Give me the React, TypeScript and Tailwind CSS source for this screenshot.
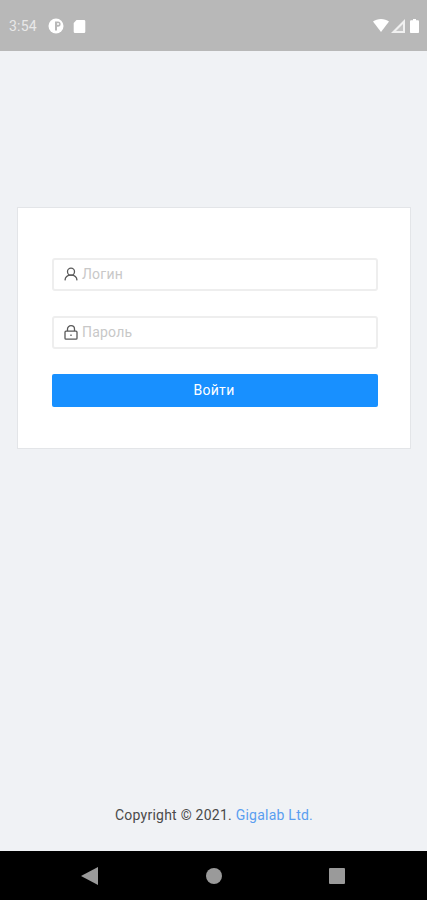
function StatusBar() {
  return (
    <div className="h-[51px] shrink-0 bg-[#b8b8b8] flex items-center justify-between pl-[9px] pr-[8px] text-white">
      <div className="flex items-center">
        <span className="text-[14px] leading-none text-[#e8e8e8] w-[28px] tracking-[0.2px]">3:54</span>
        <svg className="ml-[11px]" width="16" height="16" viewBox="0 0 16 16">
          <circle cx="8" cy="8" r="7.500" fill="#fff" />
          <path d="M7 3.500h3a2.600 2.600 0 0 1 0 5.200H9v3.800H7z" fill="#b8b8b8" />
          <circle cx="10" cy="6" r="1" fill="#fff" />
        </svg>
        <svg className="ml-[9px]" width="13" height="14" viewBox="0 0 13 14">
          <path d="M3.500 1H11a1.300 1.300 0 0 1 1.300 1.300v10.400A1.300 1.300 0 0 1 11 14H2a1.300 1.300 0 0 1-1.300-1.300V4z" fill="#fff" />
        </svg>
      </div>
      <div className="flex items-center gap-[2px]">
        <svg width="16" height="13" viewBox="0 0 16 13">
          <path d="M0 2.500C2 .9 5 0 8 0s6 .9 8 2.500L8 13z" fill="#fff" />
        </svg>
        <svg width="14" height="14" viewBox="0 0 14 14">
          <path d="M14 0v14H0z" fill="#f0f0f0" />
          <path d="M12 5v7H5z" fill="#c4c4c4" />
        </svg>
        <svg className="ml-[3px]" width="9" height="14" viewBox="0 0 9 14">
          <path d="M3 0h3v1.300h1.600A1.200 1.200 0 0 1 9 2.500v10.300A1.200 1.200 0 0 1 7.600 14H1.400A1.200 1.200 0 0 1 0 12.800V2.500a1.200 1.200 0 0 1 1.400-1.200H3z" fill="#fff" />
        </svg>
      </div>
    </div>
  )
}

function UserIcon() {
  return (
    <svg width="14" height="14" viewBox="0 0 14 14" fill="none" stroke="#595959" strokeWidth="1.300">
      <circle cx="7" cy="4.700" r="3.500" />
      <path d="M1 13.400c.2-3.200 2.600-5.200 6-5.200s5.800 2 6 5.200" />
    </svg>
  )
}

function LockIcon() {
  return (
    <svg width="14" height="15" viewBox="0 0 14 15" fill="none" stroke="#595959" strokeWidth="1.300">
      <rect x="1" y="6.200" width="12" height="8" rx="1" />
      <path d="M3.500 6V4a3.500 3.300 0 0 1 7 0v2" />
      <path d="M7 9.500v1.500" />
    </svg>
  )
}

function Field({ icon, placeholder }: { icon: React.ReactNode; placeholder: string }) {
  return (
    <div className="h-[33px] border-2 border-[#eeeeee] rounded-[3px] bg-white flex items-center pl-[10px] gap-[4px] pb-[1px]">
      <span className="w-[14px] flex justify-center">{icon}</span>
      <span className="text-[14px] text-[#c8c8c8] leading-none tracking-[0.2px]">{placeholder}</span>
    </div>
  )
}

export default function App() {
  return (
    <div className="w-[427px] h-[900px] flex flex-col bg-[#f0f2f5] overflow-hidden font-['Roboto',sans-serif]">
      <StatusBar />
      <main className="flex-1 flex flex-col pl-[17px] pr-[16px] pt-[156px]">
        <section className="h-[242px] bg-white border border-[#e3e5e8] pl-[34px] pr-[32px] pt-[50px] flex flex-col">
          <Field icon={<UserIcon />} placeholder="Логин" />
          <div className="mt-[25px]">
            <Field icon={<LockIcon />} placeholder="Пароль" />
          </div>
          <button className="mt-[25px] h-[33px] bg-[#1890ff] rounded-[2px] text-white text-[14px] tracking-[0.3px] pr-[2px]">Войти</button>
        </section>
        <p className="mt-auto mb-[28px] text-center text-[14px] tracking-[0.24px] leading-[16px] text-[#4a4a4a]">
          Copyright © 2021. <span className="text-[#5a9ef0]">Gigalab Ltd.</span>
        </p>
      </main>
      <nav className="h-[49px] shrink-0 bg-black flex items-center justify-between pl-[81px] pr-[82px]">
        <svg width="17" height="18" viewBox="0 0 17 18"><path d="M17 0v18L0 9z" fill="#9a9a9a" /></svg>
        <span className="w-[16px] h-[16px] rounded-full bg-[#9a9a9a]" />
        <span className="w-[16px] h-[16px] rounded-[1px] bg-[#9a9a9a]" />
      </nav>
    </div>
  )
}
